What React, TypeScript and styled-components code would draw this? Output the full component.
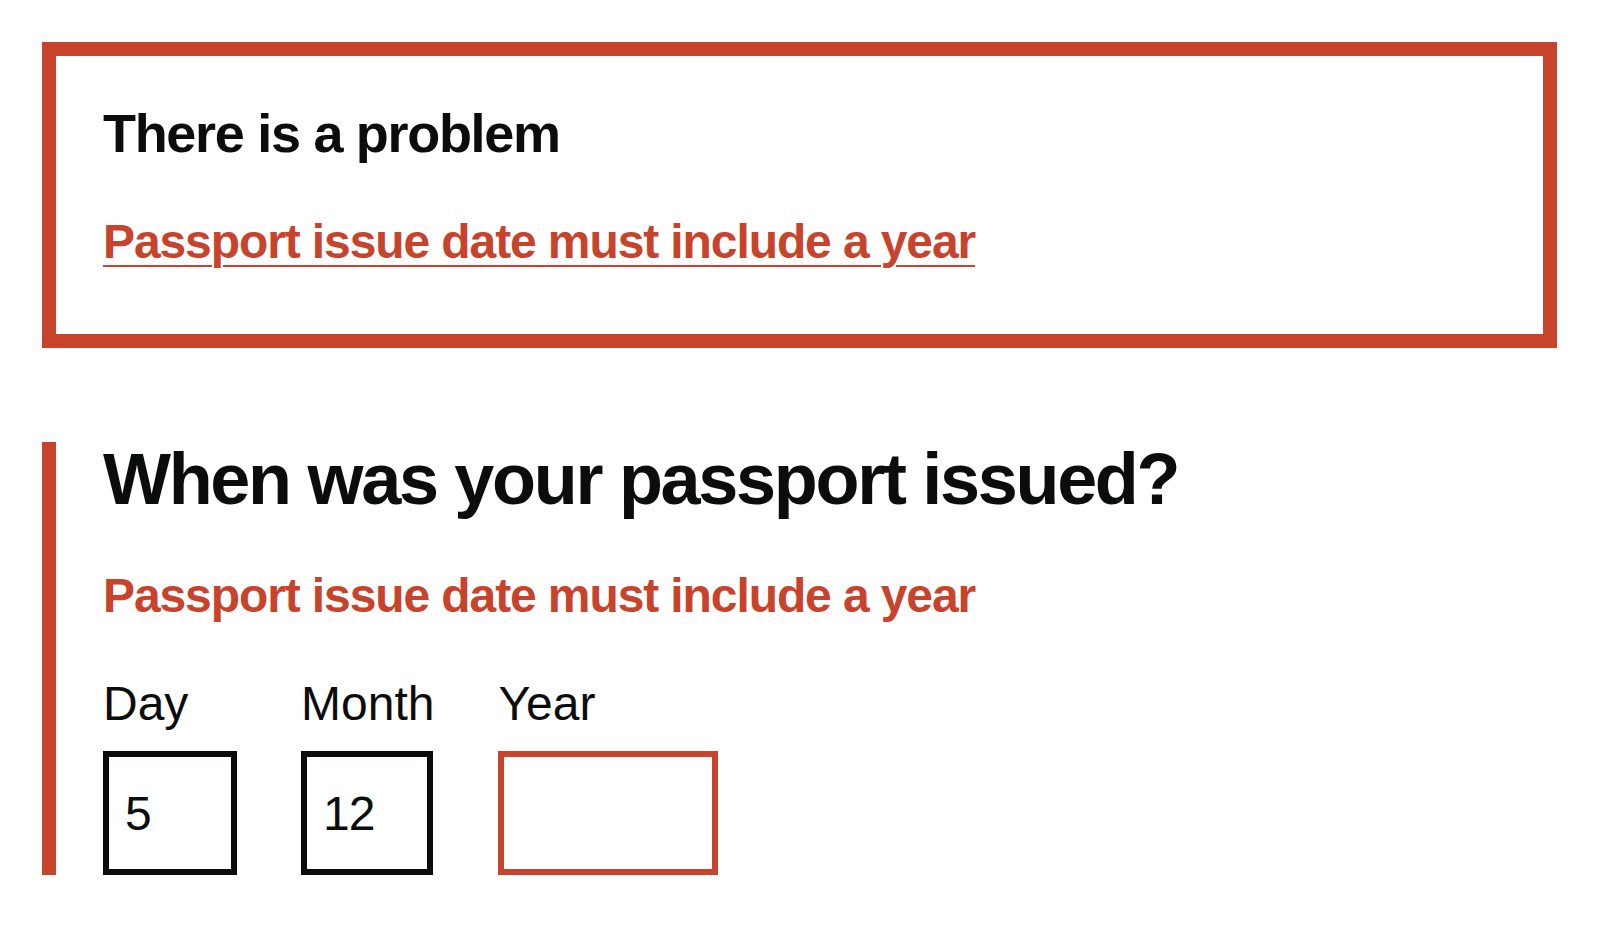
import React, { useState } from "react";
import styled, { createGlobalStyle } from "styled-components";

const RED = "#c8432b";
const INK = "#0b0c0c";

const GlobalStyle = createGlobalStyle`
  html, body {
    margin: 0;
    padding: 0;
    background: #ffffff;
  }
  body {
    font-family: "Liberation Sans", Arial, sans-serif;
    color: ${INK};
  }
`;

const Page = styled.main`
  padding: 42px 43px 0 42px;
`;

const ErrorSummary = styled.div`
  border: 14px solid ${RED};
  padding: 47px 46px 62px 47px;
`;

const SummaryTitle = styled.h2`
  margin: 0 0 49px;
  font-size: 54px;
  line-height: 60px;
  font-weight: 700;
  letter-spacing: -1.3px;
`;

const ErrorList = styled.ul`
  list-style: none;
  margin: 0;
  padding: 0;
`;

const ErrorLink = styled.a`
  font-size: 48px;
  line-height: 60px;
  font-weight: 700;
  letter-spacing: -1.1px;
  color: ${RED};
  text-decoration: underline;
  text-decoration-thickness: 2px;
  text-underline-offset: 7px;
  cursor: pointer;
`;

const FormGroup = styled.fieldset`
  margin: 94px 0 0;
  padding: 0 0 0 47px;
  border: none;
  border-left: 14px solid ${RED};
`;

const Question = styled.h1`
  margin: 0 0 49px;
  font-size: 72px;
  line-height: 75px;
  font-weight: 700;
  letter-spacing: -2.3px;
`;

const ErrorMessage = styled.p`
  margin: 0 0 48px;
  font-size: 48px;
  line-height: 60px;
  font-weight: 700;
  letter-spacing: -1.1px;
  color: ${RED};
`;

const DateRow = styled.div`
  display: flex;
  align-items: flex-start;
  gap: 64px;
`;

const DateItem = styled.div`
  display: flex;
  flex-direction: column;
`;

const DateLabel = styled.label`
  font-size: 48px;
  line-height: 60px;
  margin-bottom: 17px;
`;

const DateField = styled.input<{ $width: number; $error?: boolean }>`
  box-sizing: border-box;
  width: ${(p) => p.$width}px;
  height: 124px;
  margin: 0;
  padding: 0 15px 0 16px;
  border: 6px solid ${(p) => (p.$error ? RED : INK)};
  border-radius: 0;
  background: #ffffff;
  font-family: "Liberation Sans", Arial, sans-serif;
  font-size: 48px;
  letter-spacing: -1px;
  color: ${INK};
  outline: none;
`;

export default function App() {
  const [day, setDay] = useState("5");
  const [month, setMonth] = useState("12");
  const [year, setYear] = useState("");

  return (
    <Page>
      <GlobalStyle />
      <ErrorSummary role="alert">
        <SummaryTitle>There is a problem</SummaryTitle>
        <ErrorList>
          <li>
            <ErrorLink href="#passport-issued-year">
              Passport issue date must include a year
            </ErrorLink>
          </li>
        </ErrorList>
      </ErrorSummary>

      <FormGroup>
        <Question>When was your passport issued?</Question>
        <ErrorMessage>Passport issue date must include a year</ErrorMessage>
        <DateRow>
          <DateItem>
            <DateLabel htmlFor="passport-issued-day">Day</DateLabel>
            <DateField
              id="passport-issued-day"
              $width={134}
              value={day}
              onChange={(e) => setDay(e.target.value)}
            />
          </DateItem>
          <DateItem>
            <DateLabel htmlFor="passport-issued-month">Month</DateLabel>
            <DateField
              id="passport-issued-month"
              $width={132}
              value={month}
              onChange={(e) => setMonth(e.target.value)}
            />
          </DateItem>
          <DateItem>
            <DateLabel htmlFor="passport-issued-year">Year</DateLabel>
            <DateField
              id="passport-issued-year"
              $width={220}
              $error
              value={year}
              onChange={(e) => setYear(e.target.value)}
            />
          </DateItem>
        </DateRow>
      </FormGroup>
    </Page>
  );
}
